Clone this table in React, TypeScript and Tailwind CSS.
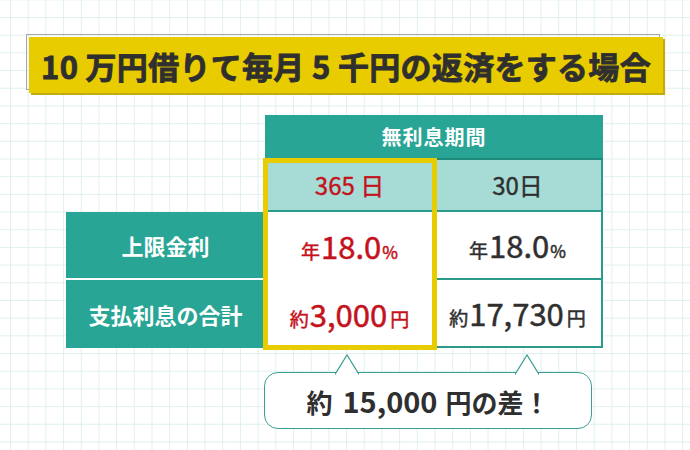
import React from 'react'

const teal = 'bg-[#29a595]'

function Pointer({ left }: { left: number }) {
  return (
    <svg
      className="absolute top-[-19px]"
      style={{ left }}
      width="24"
      height="21"
      viewBox="0 0 24 21"
    >
      <path d="M0 20.5 L12 1 L24 20.5" fill="#ffffff" stroke="#3a9e92" strokeWidth="1.2" />
      <rect x="1" y="19.6" width="22" height="2" fill="#ffffff" />
    </svg>
  )
}

function Value({ pre, num, post, red, last }: { pre: string; num: string; post: string; red?: boolean; last?: boolean }) {
  return (
    <div
      className={`bg-white flex items-center justify-center font-normal [-webkit-text-stroke:0.5px] ${red ? 'text-[#c4121c]' : 'text-[#2f2f2f]'} ${last ? 'border-r-2 border-b-2 border-[#2a9a8b]' : ''}`}
    >
      <div className="flex items-baseline leading-none pb-[2px]">
        <span className="text-[19px] mr-[1px]">{pre}</span>
        <span className="text-[31px]">{num}</span>
        <span className={post === '%' ? 'text-[17px] ml-[1px]' : 'text-[19px] ml-[3px]'}>{post}</span>
      </div>
    </div>
  )
}

export default function App() {
  return (
    <div
      className="w-[690px] h-[450px] overflow-hidden bg-white bg-[linear-gradient(to_right,#dff0ee_1px,transparent_1px),linear-gradient(to_bottom,#dff0ee_1px,transparent_1px)] bg-[size:17.7px_17.7px] bg-[position:10px_17px] text-[#333333]"
      style={{ fontFamily: '"Noto Sans CJK JP", "Noto Sans", sans-serif' }}
    >
      {/* タイトル */}
      <div className="ml-[26px] mt-[34px] w-[634px] h-[56px] border border-[#a8a8a8]">
        <div className="translate-x-[2px] translate-y-[2px] w-[634px] h-[56px] bg-[#e8cc00] shadow-[2px_2px_0_#c2aa10] flex items-center justify-center">
          <span className="text-[31px] font-bold leading-none tracking-[0.3px] text-[#2f2f2f] [-webkit-text-stroke:0.8px]">
            10 万円借りて毎月 5 千円の返済をする場合
          </span>
        </div>
      </div>

      {/* 表 */}
      <div className="relative ml-[66px] mt-[25px] w-[537px]">
        <div className="grid grid-cols-[199px_169px_169px] grid-rows-[45px_52px_68px_68px]">
          <div />
          <div className={`col-span-2 ${teal} flex items-center justify-center text-white text-[20px] font-bold tracking-[1px] border-b-2 border-[#1f8a7c]`}>
            無利息期間
          </div>

          <div />
          <div className="bg-[#a6dcd5] flex items-center justify-center text-[24px] [-webkit-text-stroke:0.4px] text-[#c4121c] border-b-2 border-[#2a9a8b]">
            365 日
          </div>
          <div className="bg-[#a6dcd5] flex items-center justify-center text-[24px] [-webkit-text-stroke:0.4px] text-[#2f2f2f] border-b-2 border-r-2 border-[#2a9a8b]">
            30日
          </div>

          <div className={`${teal} flex items-center justify-center text-white text-[22px] font-bold border-b-2 border-white`}>
            上限金利
          </div>
          <Value pre="年" num="18.0" post="%" red />
          <Value pre="年" num="18.0" post="%" last />

          <div className={`${teal} flex items-center justify-center text-white text-[22px] font-bold`}>
            支払利息の合計
          </div>
          <Value pre="約" num="3,000" post="円" red />
          <Value pre="約" num="17,730" post="円" last />
        </div>

        {/* 365日の枠 */}
        <div className="absolute left-[197px] top-[43px] w-[174px] h-[192px] border-[5px] border-[#e8cc00]" />
      </div>

      {/* 吹き出し */}
      <div className="relative ml-[264px] mt-[24px] w-[328px] h-[57px] rounded-[14px] border border-[#3a9e92] bg-white flex items-center justify-center">
        <Pointer left={70} />
        <Pointer left={250} />
        <div className="flex items-baseline leading-none font-bold text-[#2f2f2f]">
          <span className="text-[26px]">約</span>
          <span className="text-[29px] ml-[10px]">15,000</span>
          <span className="text-[26px] ml-[8px]">円の差！</span>
        </div>
      </div>
    </div>
  )
}
